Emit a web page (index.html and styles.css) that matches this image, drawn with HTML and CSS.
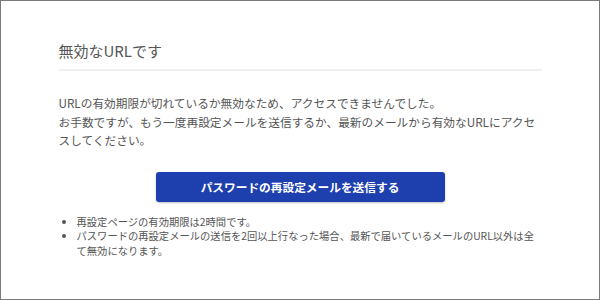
FILE: index.html
```html
<!DOCTYPE html>
<html lang="ja">
<head>
<meta charset="utf-8">
<title>無効なURLです</title>
<link rel="stylesheet" href="styles.css">
</head>
<body>
<div class="frame">
  <main class="panel">
    <h1 class="title">無効なURLです</h1>
    <hr class="rule">
    <p class="message">URLの有効期限が切れているか無効なため、アクセスできませんでした。<br>お手数ですが、もう一度再設定メールを送信するか、最新のメールから有効なURLにアクセスしてください。</p>
    <div class="actions">
      <button class="btn" type="button">パスワードの再設定メールを送信する</button>
    </div>
    <ul class="notes">
      <li>再設定ページの有効期限は2時間です。</li>
      <li>パスワードの再設定メールの送信を2回以上行なった場合、最新で届いているメールのURL以外は全て無効になります。</li>
    </ul>
  </main>
</div>
</body>
</html>
```
FILE: styles.css
```css
html, body {
  margin: 0;
  padding: 0;
  background: #fff;
}
body {
  font-family: "Noto Sans CJK JP", "Noto Sans", sans-serif;
  color: #555;
}
.frame {
  box-sizing: border-box;
  width: 600px;
  height: 300px;
  border: 1px solid #7a7a7a;
  overflow: hidden;
}
.panel {
  width: 483px;
  margin: 0 auto;
  padding-top: 40px;
}
.title {
  margin: 0;
  font-size: 15px;
  font-weight: 400;
  line-height: 20px;
  color: #555;
}
.rule {
  margin: 8px 0 0;
  border: 0;
  height: 2px;
  background: #efefef;
}
.message {
  margin: 23px 0 0;
  font-size: 11.7px;
  line-height: 18.5px;
}
.actions {
  display: flex;
  justify-content: center;
  margin-top: 22px;
}
.btn {
  width: 289px;
  height: 30px;
  border: 0;
  border-radius: 3px;
  background: #1e40af;
  color: #fff;
  font-family: inherit;
  font-size: 11.7px;
  font-weight: 700;
  box-shadow: 0 1px 2px rgba(0,0,0,0.25);
  padding: 0;
}
.notes {
  margin: 13px 0 0;
  padding: 0 6px 0 18px;
  font-size: 10.3px;
  line-height: 14.7px;
}
```
